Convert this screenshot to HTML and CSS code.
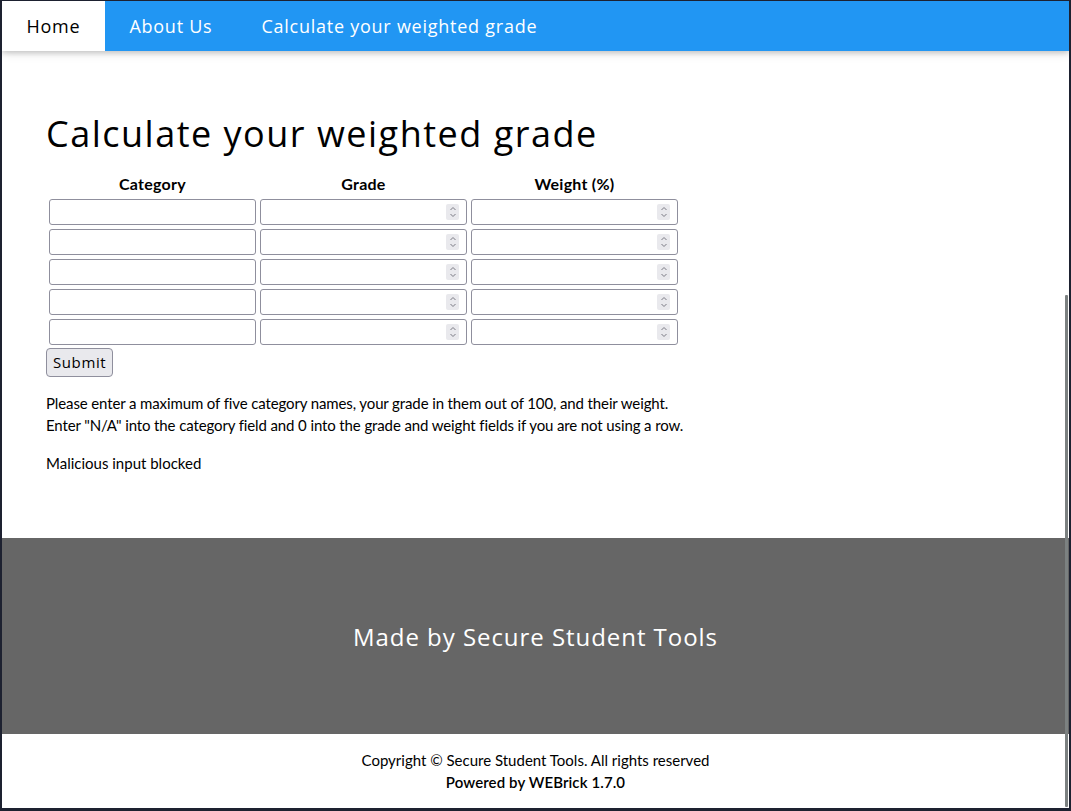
FILE: index.html
```html
<!DOCTYPE html>
<html lang="en">
<head>
<meta charset="utf-8">
<title>Calculate your weighted grade</title>
<link rel="stylesheet" href="styles.css">
</head>
<body>
<div class="frame">
  <nav class="topbar">
    <a class="nav-item nav-active" href="#">Home</a>
    <a class="nav-item" href="#">About Us</a>
    <a class="nav-item" href="#">Calculate your weighted grade</a>
  </nav>

  <main class="content">
    <h1 class="page-title">Calculate your weighted grade</h1>
    <form class="grade-form">
      <table class="grade-table">
        <thead>
          <tr><th>Category</th><th>Grade</th><th>Weight (%)</th></tr>
        </thead>
        <tbody>
          <tr>
            <td><input class="field" type="text"></td>
            <td><span class="num"><input class="field" type="text"><span class="spin"><svg viewBox="0 0 12 16" width="12" height="16"><path d="M3.5 6 L6 3.5 L8.5 6 M3.5 10 L6 12.5 L8.5 10" fill="none" stroke="#7a7a84" stroke-width="1"/></svg></span></span></td>
            <td><span class="num"><input class="field" type="text"><span class="spin"><svg viewBox="0 0 12 16" width="12" height="16"><path d="M3.5 6 L6 3.5 L8.5 6 M3.5 10 L6 12.5 L8.5 10" fill="none" stroke="#7a7a84" stroke-width="1"/></svg></span></span></td>
          </tr>
          <tr>
            <td><input class="field" type="text"></td>
            <td><span class="num"><input class="field" type="text"><span class="spin"><svg viewBox="0 0 12 16" width="12" height="16"><path d="M3.5 6 L6 3.5 L8.5 6 M3.5 10 L6 12.5 L8.5 10" fill="none" stroke="#7a7a84" stroke-width="1"/></svg></span></span></td>
            <td><span class="num"><input class="field" type="text"><span class="spin"><svg viewBox="0 0 12 16" width="12" height="16"><path d="M3.5 6 L6 3.5 L8.5 6 M3.5 10 L6 12.5 L8.5 10" fill="none" stroke="#7a7a84" stroke-width="1"/></svg></span></span></td>
          </tr>
          <tr>
            <td><input class="field" type="text"></td>
            <td><span class="num"><input class="field" type="text"><span class="spin"><svg viewBox="0 0 12 16" width="12" height="16"><path d="M3.5 6 L6 3.5 L8.5 6 M3.5 10 L6 12.5 L8.5 10" fill="none" stroke="#7a7a84" stroke-width="1"/></svg></span></span></td>
            <td><span class="num"><input class="field" type="text"><span class="spin"><svg viewBox="0 0 12 16" width="12" height="16"><path d="M3.5 6 L6 3.5 L8.5 6 M3.5 10 L6 12.5 L8.5 10" fill="none" stroke="#7a7a84" stroke-width="1"/></svg></span></span></td>
          </tr>
          <tr>
            <td><input class="field" type="text"></td>
            <td><span class="num"><input class="field" type="text"><span class="spin"><svg viewBox="0 0 12 16" width="12" height="16"><path d="M3.5 6 L6 3.5 L8.5 6 M3.5 10 L6 12.5 L8.5 10" fill="none" stroke="#7a7a84" stroke-width="1"/></svg></span></span></td>
            <td><span class="num"><input class="field" type="text"><span class="spin"><svg viewBox="0 0 12 16" width="12" height="16"><path d="M3.5 6 L6 3.5 L8.5 6 M3.5 10 L6 12.5 L8.5 10" fill="none" stroke="#7a7a84" stroke-width="1"/></svg></span></span></td>
          </tr>
          <tr>
            <td><input class="field" type="text"></td>
            <td><span class="num"><input class="field" type="text"><span class="spin"><svg viewBox="0 0 12 16" width="12" height="16"><path d="M3.5 6 L6 3.5 L8.5 6 M3.5 10 L6 12.5 L8.5 10" fill="none" stroke="#7a7a84" stroke-width="1"/></svg></span></span></td>
            <td><span class="num"><input class="field" type="text"><span class="spin"><svg viewBox="0 0 12 16" width="12" height="16"><path d="M3.5 6 L6 3.5 L8.5 6 M3.5 10 L6 12.5 L8.5 10" fill="none" stroke="#7a7a84" stroke-width="1"/></svg></span></span></td>
          </tr>
        </tbody>
      </table>
      <button class="submit-btn" type="button">Submit</button>
    </form>
    <p class="hint">Please enter a maximum of five category names, your grade in them out of 100, and their weight.<br>Enter "N/A" into the category field and 0 into the grade and weight fields if you are not using a row.</p>
    <p class="status">Malicious input blocked</p>
  </main>

  <footer class="footer-band">
    <p class="footer-text">Made by Secure Student Tools</p>
  </footer>
  <div class="legal">
    <div>Copyright © Secure Student Tools. All rights reserved</div>
    <div class="powered">Powered by WEBrick 1.7.0</div>
  </div>

  <div class="scroll-thumb"></div>
</div>
</body>
</html>
```

FILE: styles.css
```css
html, body {
  margin: 0;
  padding: 0;
}

body {
  font-family: Lato, "Liberation Sans", sans-serif;
  font-size: 15px;
  line-height: 1.5;
  color: #000;
  background: #1d2130;
}

.frame {
  position: relative;
  box-sizing: border-box;
  width: 1071px;
  height: 811px;
  border-style: solid;
  border-color: #1d2130;
  border-width: 1px 2px 3px 2px;
  background: #fff;
  overflow: hidden;
}

.topbar {
  position: relative;
  z-index: 2;
  display: flex;
  height: 50px;
  background: #2196f3;
  box-shadow: 0 2px 5px 0 rgba(0,0,0,0.16), 0 2px 10px 0 rgba(0,0,0,0.12);
}

.nav-item {
  display: block;
  padding: 12px 24.5px 11px;
  font-family: "Open Sans", sans-serif;
  font-size: 18px;
  line-height: 27px;
  letter-spacing: 0.75px;
  color: #fff;
  text-decoration: none;
}

.nav-active {
  background: #fff;
  color: #000;
}

.content {
  padding: 44px 44px 49px;
}

.page-title {
  margin: 12px 0 8px;
  font-family: "Open Sans", sans-serif;
  font-weight: 400;
  font-size: 36px;
  line-height: 54px;
  letter-spacing: 1.5px;
}

.grade-form {
  margin: 0;
}

.grade-table {
  border-spacing: 2px;
}

.grade-table th {
  padding: 2px 1px 0;
  font-weight: 700;
  font-size: 16px;
  line-height: 22.5px;
  letter-spacing: 0.25px;
  text-align: center;
}

.grade-table td {
  padding: 1px;
}

.num {
  position: relative;
  display: block;
}

.field {
  display: block;
  box-sizing: border-box;
  width: 207px;
  height: 26px;
  margin: 0;
  border: 1px solid #8f8f9d;
  border-radius: 3px;
  background: #fff;
  font: inherit;
}

.spin {
  position: absolute;
  right: 8px;
  top: 5px;
  width: 13px;
  height: 16px;
  background: #e9e9ed;
  border-radius: 2px;
}

.spin svg {
  display: block;
  margin: 0 auto;
}

.submit-btn {
  display: block;
  box-sizing: border-box;
  height: 29px;
  margin: 0;
  padding: 0 6px;
  border: 1px solid #8f8f9d;
  border-radius: 4px;
  background: #e9e9ed;
  font-family: "Open Sans", sans-serif;
  font-size: 15px;
  letter-spacing: 0.6px;
  color: #000;
}

.hint, .status {
  margin: 15px 0;
}

.hint {
  letter-spacing: -0.12px;
}

.footer-band {
  display: flex;
  align-items: center;
  justify-content: center;
  height: 196px;
  background: #666;
}

.footer-text {
  margin: 0;
  font-family: "Open Sans", sans-serif;
  font-size: 24px;
  line-height: 33px;
  letter-spacing: 0.95px;
  color: #fff;
}

.legal {
  padding: 15px 0 14px;
  text-align: center;
  line-height: 22px;
}

.powered {
  font-weight: 600;
  letter-spacing: 0.1px;
}

.scroll-thumb {
  position: absolute;
  right: 1px;
  top: 294px;
  width: 3px;
  bottom: 1px;
  background: #7c8181;
  border-radius: 1px;
}
```
